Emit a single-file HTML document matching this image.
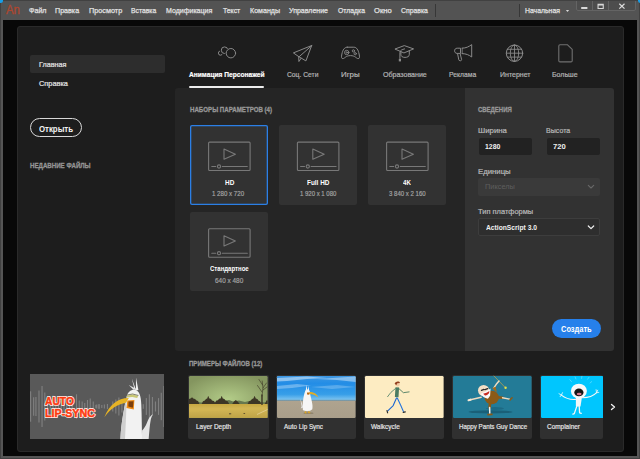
<!DOCTYPE html>
<html lang="ru">
<head>
<meta charset="utf-8">
<title>Adobe Animate</title>
<style>
*{margin:0;padding:0;box-sizing:border-box}
html,body{width:640px;height:459px;overflow:hidden;background:#555555}
body{position:relative;font-family:"Liberation Sans",sans-serif;-webkit-font-smoothing:antialiased}
.abs{position:absolute}
.menu{-webkit-text-stroke:0.25px currentColor}
.side,.tab,.lbl,.sname,.psize{-webkit-text-stroke:0.2px currentColor}
.hdr{-webkit-text-stroke:0.3px currentColor}
.logo{-webkit-text-stroke:0.3px currentColor}
.t{position:absolute;white-space:nowrap;line-height:10px;height:10px;transform-origin:0 50%;display:block}
#menubar{position:absolute;left:0;top:0;width:640px;height:20px;background:#535353}
#frame{position:absolute;left:0;top:0;width:640px;height:459px;box-shadow:inset 0 0 0 1px #414141;pointer-events:none}
.corner{position:absolute;top:-2.5px;width:5px;height:5px;border-radius:50%;background:#169ee9}
#stage{position:absolute;left:3px;top:20px;width:634px;height:436px;background:#080808}
#home{position:absolute;left:17px;top:26px;width:607px;height:425.6px;background:#1d1d1d;border-radius:3px;border:1px solid #2a2a2a}
.sep{position:absolute;top:4px;width:1px;height:13px;background:#373737}
#winctl{position:absolute;left:576px;top:-1.6px;width:60px;height:13px;border:1px solid #646464;border-radius:0 0 2px 2px;background:#4d4d4d}
#winctl i{position:absolute;top:0;width:1px;height:11px;background:#646464}
.sel{position:absolute;left:30px;top:54.5px;width:134.5px;height:18.5px;background:#2d2d2d;border-radius:2px}
#openbtn{position:absolute;left:30.2px;top:118.3px;width:51.9px;height:18.9px;border:1.5px solid #d8d8d8;border-radius:10px}
#tabline{position:absolute;left:189px;top:85.7px;width:75.3px;height:2.3px;background:#ececec;border-radius:1px}
#main{position:absolute;left:175.3px;top:88px;width:289.7px;height:262.5px;background:#252525;border-radius:3px 0 0 3px}
#info{position:absolute;left:465px;top:88px;width:149.2px;height:262.5px;background:#323232;border-radius:0 3px 3px 0}
.card{position:absolute;width:78.5px;height:79.3px;background:#323232;border-radius:2px}
.card.on{box-shadow:inset 0 0 0 1.3px #2b7fe6;}
.inp{position:absolute;top:137.9px;width:53.2px;height:17px;background:#222222;border-radius:2px}
.sel1{position:absolute;left:478.4px;top:178px;width:122px;height:18px;background:#3a3a3a;border-radius:2px}
.sel2{position:absolute;left:478.4px;top:218.4px;width:122px;height:18px;background:#2e2e2e;border:1px solid #3d3d3d;border-radius:2px}
#create{position:absolute;left:552px;top:319.4px;width:49.2px;height:18.8px;background:#2680eb;border-radius:10px}
.smp{position:absolute;top:374.6px;width:80.4px;height:64.2px;background:#303030;border-radius:2px;overflow:hidden}
.smp svg{position:absolute;left:1px;top:1.2px}
#promo{position:absolute;left:30px;top:374.3px;width:134.3px;height:64.6px;overflow:hidden;background:#595959}
svg{display:block;overflow:visible}
.ic{position:absolute;left:0;top:0;width:640px;height:459px;pointer-events:none}
</style>
</head>
<body>
<div id="menubar">
  <div class="sep" style="left:435px"></div>
  <div class="sep" style="left:518.5px"></div>
  <div id="winctl"><i style="left:15px"></i><i style="left:31px"></i></div>
</div>
<div id="stage"></div>
<div id="frame"></div>
<div class="corner" style="left:-2.5px"></div><div class="corner" style="left:637.5px"></div>
<div id="home"></div>
<div class="sel"></div>
<div id="openbtn"></div>
<div id="tabline"></div>
<div id="main"></div>
<div id="info"></div>
<div class="card on" style="left:189.8px;top:125.3px"></div>
<div class="card" style="left:278.6px;top:125.3px"></div>
<div class="card" style="left:367.8px;top:125.3px"></div>
<div class="card" style="left:189.8px;top:212px"></div>
<div class="inp" style="left:478.6px"></div>
<div class="inp" style="left:546.6px"></div>
<div class="sel1"></div>
<div class="sel2"></div>
<div id="create"></div>
<div id="promo"><svg width="134.3" height="64.6" viewBox="0 0 134.3 64.6">
<g fill="#808080"><rect x="0.04" y="17.30" width="1.1" height="30.40"/><rect x="3.09" y="23.30" width="1.1" height="18.40"/><rect x="5.38" y="23.00" width="1.1" height="19.00"/><rect x="8.43" y="16.50" width="1.1" height="32.00"/><rect x="11.48" y="12.00" width="1.1" height="41.00"/><rect x="14.23" y="18.50" width="1.1" height="28.00"/><rect x="16.97" y="22.50" width="1.1" height="20.00"/><rect x="19.72" y="24.50" width="1.1" height="16.00"/><rect x="22.47" y="21.50" width="1.1" height="22.00"/><rect x="25.21" y="25.50" width="1.1" height="14.00"/><rect x="27.96" y="23.50" width="1.1" height="18.00"/><rect x="30.70" y="26.50" width="1.1" height="12.00"/><rect x="33.45" y="24.50" width="1.1" height="16.00"/><rect x="36.19" y="27.50" width="1.1" height="10.00"/><rect x="38.94" y="23.50" width="1.1" height="18.00"/><rect x="41.68" y="25.50" width="1.1" height="14.00"/><rect x="45.96" y="20.30" width="1.1" height="24.40"/><rect x="48.70" y="26.50" width="1.1" height="12.00"/><rect x="51.60" y="27.50" width="1.1" height="10.00"/><rect x="54.19" y="29.00" width="1.1" height="7.00"/><rect x="56.94" y="26.00" width="1.1" height="13.00"/><rect x="59.68" y="24.50" width="1.1" height="16.00"/><rect x="62.73" y="27.50" width="1.1" height="10.00"/><rect x="65.33" y="30.90" width="1.1" height="3.20"/><rect x="68.38" y="30.50" width="1.1" height="4.00"/><rect x="66.21" y="30.50" width="1.1" height="4.00"/><rect x="68.50" y="30.00" width="1.1" height="5.00"/><rect x="71.25" y="31.00" width="1.1" height="3.00"/><rect x="73.84" y="30.50" width="1.1" height="4.00"/><rect x="76.89" y="30.00" width="1.1" height="5.00"/><rect x="82.23" y="27.50" width="1.1" height="10.00"/><rect x="85.28" y="25.50" width="1.1" height="14.00"/><rect x="88.33" y="23.50" width="1.1" height="18.00"/><rect x="91.38" y="26.50" width="1.1" height="12.00"/><rect x="94.43" y="28.50" width="1.1" height="8.00"/><rect x="112.73" y="30.20" width="1.1" height="4.60"/><rect x="115.79" y="24.10" width="1.1" height="16.80"/><rect x="118.84" y="20.30" width="1.1" height="24.40"/><rect x="121.89" y="23.00" width="1.1" height="19.00"/><rect x="124.94" y="27.50" width="1.1" height="10.00"/><rect x="127.99" y="24.10" width="1.1" height="16.80"/><rect x="130.73" y="18.80" width="1.1" height="27.40"/><rect x="133.33" y="12.00" width="1.1" height="41.00"/></g>
<g id="bird">
<path d="M104.9,16.8 L101.8,4.6 L106.0,15.7 L106.0,3.5 L108.4,16.0 Z" fill="#efefef"/>
<path d="M103.4,15.7 L98.8,11.1 L106.0,14.8 Z" fill="#e4e4e4"/>
<path d="M90.4,65.6 C91.2,48.0 94.2,34.3 96.5,23.6 C97.3,17.5 101.8,15.2 105.4,16.0 C109.5,16.8 111.0,22.1 111.3,30.5 C111.8,41.9 111.8,54.1 112.1,65.6 Z" fill="#f2f2f2"/>
<path d="M90.4,65.6 C91.2,48.0 94.2,34.3 96.5,23.6 C96.5,37.4 95.7,51.1 95.0,65.6 Z" fill="#cfcfcf"/>
<path d="M111.8,65.6 L112.1,56.4 C116.3,52.6 117.1,47.3 119.4,43.5 L122.7,40.1 L120.9,45.0 C119.4,52.6 119.4,58.7 118.6,65.6 Z" fill="#e6e6e6"/>
<path d="M98.8,23.9 C88.9,23.6 79.0,30.5 74.4,43.2 C80.5,34.3 87.4,30.5 96.0,28.7 Z" fill="#e6b325"/>
<path d="M97.4,26.4 L104.4,26.1 L103.8,35.5 L96.5,34.0 Z" fill="#f08a12"/>
<path d="M98.6,27.6 L103.5,27.3 L102.9,33.7 L98.3,32.5 Z" fill="#7a3f0e"/>
<path d="M96.5,21.8 L102.6,20.6 L108.1,22.1 L107.2,23.9 L102.3,23.0 L97.1,23.6 Z" fill="#c9c774"/>
<path d="M96.2,21.2 L102.6,20.0 L108.4,21.5" stroke="#55553a" stroke-width="0.7" fill="none"/>
</g>
<g font-family="'Liberation Sans',sans-serif" font-weight="700" font-size="11.6" fill="#ffffff" stroke="#ffffff" stroke-width="2" stroke-linejoin="round">
<text x="15" y="30.6" textLength="29" lengthAdjust="spacingAndGlyphs">AUTO</text>
<text x="15" y="42.8" textLength="50" lengthAdjust="spacingAndGlyphs">LIP-SYNC</text>
</g>
<g font-family="'Liberation Sans',sans-serif" font-weight="700" font-size="11.6" fill="#fc3a10" stroke="#fc3a10" stroke-width="0.55" stroke-linejoin="round">
<text x="15" y="30.6" textLength="29" lengthAdjust="spacingAndGlyphs">AUTO</text>
<text x="15" y="42.8" textLength="50" lengthAdjust="spacingAndGlyphs">LIP-SYNC</text>
</g>
</svg></div>
<div class="smp" style="left:188.2px;width:80.4px"><svg width="78.6" height="41.9" viewBox="0 0 78.6 41.9">
<defs><radialGradient id="sky1" cx="0.5" cy="0.55" r="0.62"><stop offset="0" stop-color="#b3cc88"/><stop offset="1" stop-color="#84955f"/></radialGradient>
<linearGradient id="gr1" x1="0" y1="0" x2="0" y2="1"><stop offset="0" stop-color="#c7a840"/><stop offset="0.35" stop-color="#d2b656"/><stop offset="1" stop-color="#bfa346"/></linearGradient></defs>
<rect width="78.6" height="41.9" rx="1.2" fill="url(#sky1)"/>
<path d="M0 28.2 L0 26.5 L6 25 L12 26.5 L20 25.5 L30 26 L40 24 L44 25.5 L50 24.5 L56 26 L60 25 L78.6 26.5 L78.6 28.2 Z" fill="#66784e"/>
<path d="M0 28.2 L0 23 L1.5 22.6 L3.1 21.2 L4.2 22.6 L6 23 L7.5 24.6 L9 25 L10.5 28.2 Z M12.5 28.2 L14 25.2 L15.8 24.6 L17 23 L18.2 22.6 L19.2 19.8 L20.4 22.4 L22 23 L23 24.6 L24.8 25 L26 26.8 L27.4 24.6 L29 24.2 L30 22.8 L31.6 22.4 L32.7 19.8 L33.8 22.4 L35.4 23 L36.6 24.6 L38.4 25 L40.5 28.2 Z M43 28.2 L45 25.6 L46.8 24 L48.6 25.6 L51 28.2 Z M58.4 28.2 L60 25.2 L61.8 24.6 L63 23 L64.4 22.6 L65.6 19.8 L66.8 22.6 L68.4 23 L69.6 24.8 L71 25.2 L72.4 28.2 Z M75.6 28.2 L77.7 24.2 L78.6 24.6 L78.6 28.2 Z" fill="#3d3625"/>
<rect y="28" width="78.6" height="13.899999999999999" fill="url(#gr1)"/>
<path d="M0 33 L78.6 30.5 L78.6 33.5 L0 36 Z" fill="#d4b552" opacity="0.5"/>
<g stroke="#3b3423" fill="none" stroke-linecap="round"><path d="M73 28.4 L73 19" stroke-width="1.4"/><path d="M73 20 L74 12 L73.2 5 M74 12 L77.5 7 M73.6 9 L70 3.5 M73 16 L68.5 9.5 M74 14 L78 11" stroke-width="0.6"/></g>
<rect x="40" y="37.3" width="2.2" height="1" fill="#5a4c2c"/><rect x="54.5" y="37" width="1.6" height="0.9" fill="#5a4c2c"/>
<path d="M68 38.5 L78.6 33.5" stroke="#e8d6a0" stroke-width="0.7"/>
</svg></div>
<div class="smp" style="left:276.1px;width:80.4px"><svg width="78.6" height="41.9" viewBox="0 0 78.6 41.9">
<defs><linearGradient id="sky2" x1="0" y1="0" x2="0" y2="1"><stop offset="0" stop-color="#3d97e2"/><stop offset="0.3" stop-color="#238de6"/><stop offset="0.75" stop-color="#379ee8"/><stop offset="1" stop-color="#86c8f0"/></linearGradient>
<linearGradient id="sand2" x1="0" y1="0" x2="0" y2="1"><stop offset="0" stop-color="#b7ab96"/><stop offset="1" stop-color="#a99e8a"/></linearGradient></defs>
<rect width="78.6" height="41.9" rx="1.2" fill="url(#sand2)"/>
<path d="M1.2 0 H77.39999999999999 Q78.6 0 78.6 1.2 V24.4 H0 V1.2 Q0 0 1.2 0 Z" fill="url(#sky2)"/>
<g fill="#ffffff"><path d="M0 2 L30 0.5 L50 2 L30 3 L10 5 L0 5.5 Z" opacity="0.45"/><path d="M40 3 L78.6 0.5 L78.6 6 L60 4 Z" opacity="0.4"/><path d="M0 10 L20 8 L34 9.5 L15 12 L0 13 Z" opacity="0.3"/><path d="M34 11 L60 9 L78.6 11 L55 13 Z" opacity="0.22"/></g>
<rect y="23.8" width="78.6" height="0.9" fill="#5f7f8e" opacity="0.75"/>
<ellipse cx="31.5" cy="37.2" rx="5" ry="0.9" fill="#8f846e"/>
<path d="M28.6,16.4 L29.3,9.0 L30.6,15.1 L31.7,9.7 L32.3,16.4 Z" fill="#eef4fa"/>
<path d="M25.9,33.9 C25.3,27.2 26.6,19.1 28.2,15.1 C30.0,12.4 33.1,13.4 33.1,17.7 C34.0,23.1 36.3,28.5 35.3,33.2 C33.3,35.5 28.0,35.5 25.9,33.9 Z" fill="#f6f6f6"/>
<path d="M26.3,31.5 L23.3,22.4 L24.6,30.5 L23.7,32.5 Z" fill="#e4e4e4"/>
<path d="M32.3,16.1 C36.7,16.1 39.8,17.7 41.4,21.5 C38.0,18.8 35.3,18.0 32.3,18.0 Z" fill="#e0ae28"/>
<path d="M30.0,16.4 L32.5,16.4 L32.3,18.8 L30.1,18.4 Z" fill="#b96a18"/>
<path d="M28.6,35.2 L29.3,37.2 L27.7,37.0 Z M31.7,35.2 L33.3,36.8 L31.3,37.0 Z" fill="#e0a820" stroke="#e0a820" stroke-width="0.5"/>
</svg></div>
<div class="smp" style="left:363.8px;width:80.4px"><svg width="78.6" height="41.9" viewBox="0 0 78.6 41.9">
<rect width="78.6" height="41.9" rx="1.2" fill="#fdecc2"/>
<g fill="none" stroke-linecap="round" stroke-linejoin="round">
<path d="M30.4,12.6 L25.9,16.4 L22.6,20.7" stroke="#5d8a6f" stroke-width="0.9"/>
<path d="M31.5,22.0 L28.2,29.6 L22.8,34.9" stroke="#1c66cf" stroke-width="1.1"/>
<path d="M32.3,22.0 L35.8,29.6 L38.4,35.5" stroke="#2474dd" stroke-width="1.1"/>
<path d="M32.3,11.3 L31.7,21.2" stroke="#4b7c62" stroke-width="3.6" stroke-linecap="butt"/>
<path d="M33.9,12.6 L38.4,16.7 L44.1,15.9" stroke="#4b7c62" stroke-width="0.9"/>
<path d="M22.0,34.7 L22.6,36.8" stroke="#2a2a2a" stroke-width="1.2"/>
<path d="M38.2,36.3 L40.3,35.9" stroke="#2a2a2a" stroke-width="1.2"/>
</g>
<circle cx="32.5" cy="8.1" r="2.4" fill="#f3c9a2"/>
<path d="M29.7,8.1 C29.7,5.1 34.9,4.8 34.9,7.0 L32.3,7.3 L31.5,9.1 Z" fill="#93401f"/>
</svg></div>
<div class="smp" style="left:451.6px;width:80.4px"><svg width="78.6" height="41.9" viewBox="0 0 78.6 41.9">
<rect width="78.6" height="41.9" rx="1.2" fill="#237b97"/>
<ellipse cx="37.6" cy="35.9" rx="22" ry="1.6" fill="#1a6078"/>
<ellipse cx="42" cy="32.5" rx="9" ry="1.5" fill="#1d6a84"/>
<g fill="none" stroke-linecap="round">
<path d="M41.0,0.0 L52.4,11.7" stroke="#c9a64a" stroke-width="0.7"/>
<path d="M40.6,12.4 L43.7,7.7 L46.0,5.1" stroke="#f0dcc0" stroke-width="1.5"/>
<path d="M28.2,21.2 L17.5,23.7" stroke="#f0dcc0" stroke-width="1.4"/>
<path d="M17.5,23.7 L15.6,24.2" stroke="#f6e8d4" stroke-width="2.2"/>
<path d="M44.4,21.2 L49.5,21.8" stroke="#8b5a17" stroke-width="2.4"/>
<path d="M49.5,21.8 L56.5,23.1" stroke="#f0dcc0" stroke-width="1.4"/>
<path d="M57.1,23.9 L59.1,21.8" stroke="#8b5a17" stroke-width="1.6"/>
<path d="M37.1,26.5 L36.6,31.5" stroke="#8b5a17" stroke-width="2.6"/>
<path d="M36.6,31.5 L36.8,37.2" stroke="#f4f0ea" stroke-width="1.5"/>
<path d="M34.9,38.6 L39.0,38.4" stroke="#8b5a17" stroke-width="1.6"/>
</g>
<circle cx="52.6" cy="11.8" r="1.2" fill="#e6e04a"/>
<ellipse cx="38.7" cy="21.5" rx="7.2" ry="6.8" fill="#8b5a17"/>
<path d="M39.2,12.1 L42.7,10.8 L43.7,16.4 Z" fill="#a06a1c"/>
<circle cx="30.6" cy="14.5" r="5.6" fill="#f2dfc6"/>
<path d="M27.6,17.7 C30.9,16.4 35.6,13.7 37.6,12.4 L37.1,19.8 L34.9,22.8 C31.6,21.8 28.9,20.4 27.6,17.7 Z" fill="#f8f8f8"/>
<path d="M30.2,17.7 C32.3,17.5 34.7,16.4 36.3,15.1 C36.6,17.7 34.3,19.8 32.0,19.4 Z" fill="#c82a1c"/>
<path d="M28.5,14.4 L30.9,13.4 M32.0,13.7 L34.7,12.6" stroke="#2a2a2a" stroke-width="1.3" stroke-linecap="round"/>
</svg></div>
<div class="smp" style="left:539.5px;width:63.8px"><svg width="63.2" height="41.9" viewBox="0 0 63.2 41.9">
<path d="M1.2 0 H63.2 V41.9 H1.2 Q0 41.9 0 40.699999999999996 V1.2 Q0 0 1.2 0 Z" fill="#00c6fe"/>
<g fill="none" stroke="#f4f7f8" stroke-linecap="round" stroke-linejoin="round">
<path d="M34.5,23.4 C29.2,23.8 24.5,22.4 20.4,19.1" stroke-width="1.1"/>
<path d="M41.3,21.8 C47.3,21.8 52.7,19.8 55.6,16.7" stroke-width="1.1"/>
<path d="M20.4,19.1 L18.0,17.7 M20.4,19.1 L19.1,20.7 M20.4,19.1 L21.5,16.7" stroke-width="0.8"/>
<path d="M55.6,16.7 L55.1,13.7 M55.6,16.7 L57.8,16.4 M55.6,16.7 L56.7,14.2" stroke-width="0.8"/>
<path d="M36.0,29.6 L33.3,37.6 L31.9,38.2" stroke-width="1.3"/>
<path d="M38.2,29.6 L38.6,36.8 L40.3,37.4" stroke-width="1.3"/>
</g>
<path d="M34.9,21.8 L40.9,21.5 L39.5,30.5 L34.9,30.5 Z" fill="#f4f6f7"/>
<ellipse cx="37.9" cy="15.1" rx="8" ry="7.4" fill="#f6f8f9"/>
<ellipse cx="37.9" cy="16.4" rx="4.6" ry="3.9" fill="#151515"/>
<ellipse cx="38.2" cy="18.0" rx="2.4" ry="1.2" fill="#d9788a"/>
<g stroke="#9aeaff" stroke-width="0.5" stroke-linecap="round"><path d="M28.8,3.6 L30.5,5.6 M34.1,0.9 L34.9,3.0 M40.9,0.3 L40.6,2.4 M48.0,1.3 L46.6,3.2 M50.7,5.6 L49.1,7.0"/></g>
</svg></div>
<svg class="ic" viewBox="0 0 640 459" fill="none" stroke="#898989" stroke-width="1" stroke-linecap="round" stroke-linejoin="round">
  <!-- character animation -->
  <g id="ic-char">
    <circle cx="220.5" cy="53.1" r="2.1"/>
    <circle cx="224.6" cy="50.2" r="4.1" fill="#1d1d1d" stroke="#1d1d1d" stroke-width="1.6"/>
    <circle cx="224.6" cy="50.2" r="3.3"/>
    <circle cx="230.9" cy="53.2" r="5.6" fill="#1d1d1d" stroke="none"/>
    <circle cx="230.9" cy="53.2" r="4.7"/>
  </g>
  <!-- paper plane -->
  <g id="ic-social">
    <path d="M311.7 45.5 L293.4 52.9 L298.7 56.6 Z"/>
    <path d="M298.7 56.6 L305.9 60.9 L311.7 45.5"/>
    <path d="M298.7 56.6 L298.9 61.5 L301.2 58.2"/>
  </g>
  <!-- gamepad -->
  <g id="ic-games">
    <path d="M347.2 47.2 L353.8 47.2 C356.8 47.2 358.2 50 359.1 54 C359.9 57.4 359.5 58.6 358.2 58.6 C356.3 58.6 355.3 55.6 350.5 55.6 C345.7 55.6 344.7 58.6 342.8 58.6 C341.5 58.6 341.1 57.4 341.9 54 C342.8 50 344.2 47.2 347.2 47.2 Z"/>
    <circle cx="346.7" cy="52.5" r="2.2" stroke-width="0.9"/>
    <circle cx="346.7" cy="52.5" r="0.7" stroke-width="0.8"/>
    <circle cx="353.4" cy="50.9" r="1.15" stroke-width="0.9"/>
    <circle cx="355.2" cy="53.7" r="1.15" stroke-width="0.9"/>
  </g>
  <!-- graduation cap -->
  <g id="ic-edu">
    <path d="M395.3 48.9 L404.3 45.6 L413.6 48.9 L404.3 52.8 Z"/>
    <path d="M400.9 51.6 L400.9 54.6 C400.9 56.4 402.6 57.4 405 57.4 C407.4 57.4 409.3 56.4 409.3 54.6 L409.3 50.8"/>
    <path d="M404.6 48.9 C402 49.5 399.9 50.4 399.9 52.5 L399.9 58.4"/>
    <path d="M399.9 58.8 L399.9 61.4" stroke-width="2.2" stroke-linecap="butt"/>
  </g>
  <!-- megaphone -->
  <g id="ic-ads">
    <path d="M460.1 48.2 L457.2 48.2 C455.5 48.2 454.6 49.4 454.6 50.8 C454.6 52.2 455.5 53.4 457.2 53.4 L460.1 53.4 Z"/>
    <path d="M462.2 48.2 C466 48.2 469 46.6 471.7 44.6 L471.7 57 C469 55 466 53.6 462.2 53.6"/>
    <path d="M462.2 48.2 L462.2 53.6" stroke-width="0.8"/>
    <path d="M457.6 53.8 L458.8 59.8 C459.1 61.3 461.9 61 461.6 59.5 L460.2 53.8"/>
  </g>
  <!-- globe -->
  <g id="ic-web" stroke-width="0.85" stroke="#8c8c8c">
    <circle cx="514.5" cy="53.2" r="8.2" stroke-width="1"/>
    <ellipse cx="514.5" cy="53.2" rx="4.2" ry="8.2"/>
    <path d="M514.5 45 V61.4 M506.3 53.2 H522.7 M507.3 49.3 H521.7 M507.3 57.1 H521.7"/>
  </g>
  <!-- document -->
  <g id="ic-more" stroke="#707070" stroke-width="1.1">
    <path d="M560 44.7 L567.3 44.7 L572.2 49.4 L572.2 60.7 Q572.2 61.9 571 61.9 L560 61.9 Q558.8 61.9 558.8 60.7 L558.8 45.9 Q558.8 44.7 560 44.7 Z"/>
  </g>
  <!-- dropdown arrow / window buttons -->
  <g stroke="none" fill="#d8d8d8">
    <path d="M565.9 9.9 L569.1 9.9 L567.5 11.9 Z"/>
    <rect x="581.2" y="7" width="6.2" height="2"/>
    <path d="M597.5 3.8 H603.8 V9 H597.5 Z M598.6 5.6 V8 H602.7 V5.6 Z" fill-rule="evenodd"/>
  </g>
  <path d="M619.3 3.8 L624.5 8.6 M624.5 3.8 L619.3 8.6" stroke="#dcdcdc" stroke-width="1.2" stroke-linecap="butt"/>
  <!-- chevrons -->
  <path d="M588.3 185.3 L591 188 L593.7 185.3" stroke="#686868" stroke-width="1.1"/>
  <path d="M588.3 226 L591 228.7 L593.7 226" stroke="#f0f0f0" stroke-width="1.2"/>
  <path d="M611.5 404.4 L614.5 407 L611.5 409.6" stroke="#f4f4f4" stroke-width="1.3"/>
  <!-- preset icons -->
  <defs>
    <g id="vid" stroke="#787878" stroke-width="1.1">
      <rect x="18.8" y="16.6" width="41.5" height="28.4" rx="1"/>
      <path d="M34.2 23.6 L45.6 28.7 L34.2 33.8 Z"/>
      <path d="M22 41 H25.9 M32.5 41 H57.5"/>
      <circle cx="29.2" cy="41" r="1.6"/>
    </g>
  </defs>
  <use href="#vid" x="189.8" y="125.5"/>
  <use href="#vid" x="278.6" y="125.5"/>
  <use href="#vid" x="367.8" y="125.5"/>
  <use href="#vid" x="189.8" y="212.2"/>
</svg>

<span class="t menu" style="left:28.50px;top:6.10px;font-size:7.30px;font-weight:400;color:#e2e2e2;transform:scaleX(0.9775)">Файл</span>
<span class="t menu" style="left:54.71px;top:6.10px;font-size:7.30px;font-weight:400;color:#e2e2e2;transform:scaleX(0.9775)">Правка</span>
<span class="t menu" style="left:88.71px;top:6.10px;font-size:7.30px;font-weight:400;color:#e2e2e2;transform:scaleX(0.9959)">Просмотр</span>
<span class="t menu" style="left:130.60px;top:6.10px;font-size:7.30px;font-weight:400;color:#e2e2e2;transform:scaleX(0.9277)">Вставка</span>
<span class="t menu" style="left:166.04px;top:6.10px;font-size:7.30px;font-weight:400;color:#e2e2e2;transform:scaleX(0.9620)">Модификация</span>
<span class="t menu" style="left:222.58px;top:6.10px;font-size:7.30px;font-weight:400;color:#e2e2e2;transform:scaleX(0.9384)">Текст</span>
<span class="t menu" style="left:249.53px;top:6.10px;font-size:7.30px;font-weight:400;color:#e2e2e2;transform:scaleX(0.9731)">Команды</span>
<span class="t menu" style="left:288.60px;top:6.10px;font-size:7.30px;font-weight:400;color:#e2e2e2;transform:scaleX(0.9610)">Управление</span>
<span class="t menu" style="left:337.67px;top:6.10px;font-size:7.30px;font-weight:400;color:#e2e2e2;transform:scaleX(0.9337)">Отладка</span>
<span class="t menu" style="left:373.93px;top:6.10px;font-size:7.30px;font-weight:400;color:#e2e2e2;transform:scaleX(1.0413)">Окно</span>
<span class="t menu" style="left:400.50px;top:6.10px;font-size:7.30px;font-weight:400;color:#e2e2e2;transform:scaleX(0.9398)">Справка</span>
<span class="t menu" style="left:525.03px;top:6.10px;font-size:7.30px;font-weight:400;color:#e2e2e2;transform:scaleX(0.9404)">Начальная</span>
<span class="t logo" style="left:5.67px;top:4.90px;font-size:11.90px;font-weight:400;color:#ad4730;transform:scaleX(0.9585)">An</span>
<span class="t side" style="left:38.53px;top:59.80px;font-size:7.30px;font-weight:400;color:#e6e6e6;transform:scaleX(0.9846)">Главная</span>
<span class="t side" style="left:38.78px;top:79.30px;font-size:7.30px;font-weight:400;color:#e6e6e6;transform:scaleX(1.0122)">Справка</span>
<span class="t btn" style="left:38.60px;top:123.50px;font-size:8.40px;font-weight:700;color:#f2f2f2;transform:scaleX(0.9354)">Открыть</span>
<span class="t hdr" style="left:29.50px;top:161.00px;font-size:7.20px;font-weight:700;color:#949494;transform:scaleX(0.8536)">НЕДАВНИЕ ФАЙЛЫ</span>
<span class="t tab" style="left:188.63px;top:70.10px;font-size:7.30px;font-weight:700;color:#ffffff;transform:scaleX(0.9089)">Анимация Персонажей</span>
<span class="t tab" style="left:286.55px;top:70.10px;font-size:7.30px;font-weight:400;color:#b4b4b4;transform:scaleX(0.9219)">Соц. Сети</span>
<span class="t tab" style="left:340.56px;top:70.10px;font-size:7.30px;font-weight:400;color:#b4b4b4;transform:scaleX(1.0823)">Игры</span>
<span class="t tab" style="left:382.70px;top:70.10px;font-size:7.30px;font-weight:400;color:#b4b4b4;transform:scaleX(0.9684)">Образование</span>
<span class="t tab" style="left:448.59px;top:70.10px;font-size:7.30px;font-weight:400;color:#b4b4b4;transform:scaleX(0.9311)">Реклама</span>
<span class="t tab" style="left:499.55px;top:70.10px;font-size:7.30px;font-weight:400;color:#b4b4b4;transform:scaleX(0.9586)">Интернет</span>
<span class="t tab" style="left:551.78px;top:70.10px;font-size:7.30px;font-weight:400;color:#b4b4b4;transform:scaleX(0.9608)">Больше</span>
<span class="t hdr" style="left:189.65px;top:105.30px;font-size:7.20px;font-weight:700;color:#979797;transform:scaleX(0.8537)">НАБОРЫ ПАРАМЕТРОВ (4)</span>
<span class="t hdr" style="left:477.50px;top:105.00px;font-size:7.20px;font-weight:700;color:#979797;transform:scaleX(0.8307)">СВЕДЕНИЯ</span>
<span class="t hdr" style="left:188.70px;top:359.30px;font-size:7.20px;font-weight:700;color:#979797;transform:scaleX(0.8461)">ПРИМЕРЫ ФАЙЛОВ (12)</span>
<span class="t pname" style="left:224.61px;top:177.80px;font-size:7.00px;font-weight:700;color:#ffffff;transform:scaleX(0.9213)">HD</span>
<span class="t psize" style="left:211.54px;top:189.10px;font-size:7.00px;font-weight:400;color:#a2a2a2;transform:scaleX(0.8773)">1 280 x 720</span>
<span class="t pname" style="left:306.52px;top:177.80px;font-size:7.00px;font-weight:700;color:#ffffff;transform:scaleX(0.9137)">Full HD</span>
<span class="t psize" style="left:299.70px;top:189.10px;font-size:7.00px;font-weight:400;color:#a2a2a2;transform:scaleX(0.8566)">1 920 x 1 080</span>
<span class="t pname" style="left:403.05px;top:177.80px;font-size:7.00px;font-weight:700;color:#ffffff;transform:scaleX(0.8852)">4K</span>
<span class="t psize" style="left:388.52px;top:189.10px;font-size:7.00px;font-weight:400;color:#a2a2a2;transform:scaleX(0.8657)">3 840 x 2 160</span>
<span class="t pname" style="left:209.70px;top:264.40px;font-size:7.00px;font-weight:700;color:#ffffff;transform:scaleX(0.8610)">Стандартное</span>
<span class="t psize" style="left:214.50px;top:275.90px;font-size:7.00px;font-weight:400;color:#a2a2a2;transform:scaleX(0.9181)">640 x 480</span>
<span class="t lbl" style="left:477.55px;top:126.10px;font-size:7.50px;font-weight:400;color:#b9b9b9;transform:scaleX(1.0434)">Ширина</span>
<span class="t lbl" style="left:545.78px;top:126.10px;font-size:7.50px;font-weight:400;color:#b9b9b9;transform:scaleX(0.9406)">Высота</span>
<span class="t val" style="left:484.53px;top:141.70px;font-size:7.30px;font-weight:700;color:#f0f0f0;transform:scaleX(0.9452)">1280</span>
<span class="t val" style="left:552.63px;top:141.70px;font-size:7.30px;font-weight:700;color:#f0f0f0;transform:scaleX(1.0492)">720</span>
<span class="t lbl" style="left:477.50px;top:166.50px;font-size:7.50px;font-weight:400;color:#b9b9b9;transform:scaleX(1.0347)">Единицы</span>
<span class="t val" style="left:484.67px;top:182.40px;font-size:7.50px;font-weight:400;color:#5e5e5e;transform:scaleX(0.9818)">Пикселы</span>
<span class="t lbl" style="left:477.55px;top:206.50px;font-size:7.50px;font-weight:400;color:#b9b9b9;transform:scaleX(0.9945)">Тип платформы</span>
<span class="t val" style="left:485.59px;top:223.10px;font-size:7.30px;font-weight:700;color:#f0f0f0;transform:scaleX(0.9176)">ActionScript 3.0</span>
<span class="t btn" style="left:560.70px;top:324.00px;font-size:8.40px;font-weight:700;color:#ffffff;transform:scaleX(0.8910)">Создать</span>
<span class="t sname" style="left:195.62px;top:421.90px;font-size:7.10px;font-weight:400;color:#e4e4e4;transform:scaleX(0.9097)">Layer Depth</span>
<span class="t sname" style="left:283.57px;top:421.90px;font-size:7.10px;font-weight:400;color:#e4e4e4;transform:scaleX(0.8893)">Auto Lip Sync</span>
<span class="t sname" style="left:371.24px;top:421.90px;font-size:7.10px;font-weight:400;color:#e4e4e4;transform:scaleX(0.9084)">Walkcycle</span>
<span class="t sname" style="left:458.70px;top:421.90px;font-size:7.10px;font-weight:400;color:#e4e4e4;transform:scaleX(0.8729)">Happy Pants Guy Dance</span>
<span class="t sname" style="left:546.72px;top:421.90px;font-size:7.10px;font-weight:400;color:#e4e4e4;transform:scaleX(0.9084)">Complainer</span>
</body>
</html>
